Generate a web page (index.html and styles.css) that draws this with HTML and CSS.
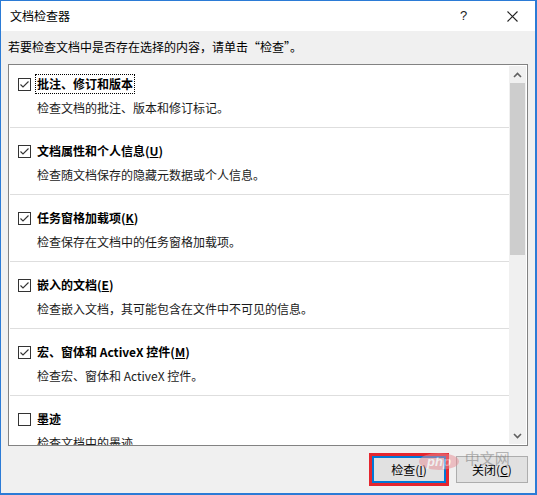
FILE: index.html
```html
<!DOCTYPE html>
<html lang="zh-CN">
<head>
<meta charset="utf-8">
<title>文档检查器</title>
<link rel="stylesheet" href="styles.css">
</head>
<body>
<div class="window">
  <div class="titlebar">
    <span class="title">文档检查器</span>
    <span class="help">?</span>
    <span class="close">
      <svg width="11" height="11" viewBox="0 0 11 11"><path d="M0.5 0.5L10.5 10.5M10.5 0.5L0.5 10.5" stroke="#222" stroke-width="1.1" fill="none"/></svg>
    </span>
  </div>
  <div class="body">
    <div class="intro">若要检查文档中是否存在选择的内容，请单击“检查”。</div>
    <div class="list">
      <div class="items">
        <div class="item">
          <div class="row">
            <span class="cb checked"><svg width="11" height="11" viewBox="0 0 11 11"><path d="M1.5 5.5L4 8L9.5 2.5" stroke="#333" stroke-width="1.1" fill="none"/></svg></span>
            <span class="name focus">批注、修订和版本</span>
          </div>
          <div class="desc">检查文档的批注、版本和修订标记。</div>
        </div>
        <div class="item">
          <div class="row">
            <span class="cb checked"><svg width="11" height="11" viewBox="0 0 11 11"><path d="M1.5 5.5L4 8L9.5 2.5" stroke="#333" stroke-width="1.1" fill="none"/></svg></span>
            <span class="name">文档属性和个人信息(<u>U</u>)</span>
          </div>
          <div class="desc">检查随文档保存的隐藏元数据或个人信息。</div>
        </div>
        <div class="item">
          <div class="row">
            <span class="cb checked"><svg width="11" height="11" viewBox="0 0 11 11"><path d="M1.5 5.5L4 8L9.5 2.5" stroke="#333" stroke-width="1.1" fill="none"/></svg></span>
            <span class="name">任务窗格加载项(<u>K</u>)</span>
          </div>
          <div class="desc">检查保存在文档中的任务窗格加载项。</div>
        </div>
        <div class="item">
          <div class="row">
            <span class="cb checked"><svg width="11" height="11" viewBox="0 0 11 11"><path d="M1.5 5.5L4 8L9.5 2.5" stroke="#333" stroke-width="1.1" fill="none"/></svg></span>
            <span class="name">嵌入的文档(<u>E</u>)</span>
          </div>
          <div class="desc">检查嵌入文档，其可能包含在文件中不可见的信息。</div>
        </div>
        <div class="item">
          <div class="row">
            <span class="cb checked"><svg width="11" height="11" viewBox="0 0 11 11"><path d="M1.5 5.5L4 8L9.5 2.5" stroke="#333" stroke-width="1.1" fill="none"/></svg></span>
            <span class="name">宏、窗体和 ActiveX 控件(<u>M</u>)</span>
          </div>
          <div class="desc">检查宏、窗体和 ActiveX 控件。</div>
        </div>
        <div class="item">
          <div class="row">
            <span class="cb"></span>
            <span class="name">墨迹</span>
          </div>
          <div class="desc">检查文档中的墨迹。</div>
        </div>
      </div>
      <div class="scrollbar">
        <div class="arrow up"><svg width="9" height="6" viewBox="0 0 9 6"><path d="M1 5L4.5 1.5L8 5" stroke="#606060" stroke-width="1.6" fill="none"/></svg></div>
        <div class="track">
          <div class="thumb"></div>
        </div>
        <div class="arrow down"><svg width="9" height="6" viewBox="0 0 9 6"><path d="M1 1L4.5 4.5L8 1" stroke="#606060" stroke-width="1.6" fill="none"/></svg></div>
      </div>
    </div>
    <div class="buttons">
      <span class="highlight"><button class="btn primary">检查(<u>I</u>)</button></span>
      <button class="btn">关闭(<u>C</u>)</button>
    </div>
  </div>
  <div class="watermark"><span class="wm-php">php</span><span class="wm-cn">中文网</span></div>
</div>
</body>
</html>
```

FILE: styles.css
```css
html, body {
  margin: 0;
  padding: 0;
  background: #ffffff;
}
body {
  font-family: "Noto Sans CJK SC", "Noto Sans", "DejaVu Sans", sans-serif;
  font-size: 12px;
  color: #000;
}
.window {
  position: relative;
  box-sizing: border-box;
  width: 537px;
  height: 495px;
  border: 1px solid #2b7bd6;
  border-width: 1px 2px 2px 1px;
  display: flex;
  flex-direction: column;
  overflow: hidden;
}
.titlebar {
  height: 30px;
  flex: none;
  background: #ffffff;
  display: flex;
  align-items: center;
  padding-left: 9px;
}
.title {
  font-size: 12px;
  line-height: 16px;
  flex: 1;
  margin-top: -1px;
}
.help {
  width: 12px;
  font-size: 13px;
  line-height: 16px;
  color: #222;
  margin-right: 35px;
  font-family: "Liberation Sans", sans-serif;
}
.close {
  width: 11px;
  height: 11px;
  margin-right: 17px;
  display: flex;
}
.body {
  flex: 1;
  background: #f0f0f0;
  padding: 0 7px 0 7px;
  display: flex;
  flex-direction: column;
}
.intro {
  height: 33px;
  line-height: 16px;
  padding-top: 8px;
  box-sizing: border-box;
}
.list {
  height: 382px;
  box-sizing: border-box;
  border: 1px solid #828282;
  background: #ffffff;
  display: flex;
  overflow: hidden;
}
.items {
  flex: 1;
  overflow: hidden;
  margin-top: -4px;
  padding-left: 1px;
}
.item {
  height: 67px;
  box-sizing: border-box;
  border-bottom: 1px solid #dedede;
  padding-top: 16px;
}
.row {
  display: flex;
  align-items: center;
  height: 14px;
  padding-left: 8px;
}
.cb {
  width: 13px;
  height: 13px;
  box-sizing: border-box;
  border: 1px solid #333333;
  background: #fff;
  display: flex;
  align-items: center;
  justify-content: center;
  flex: none;
}
.name {
  margin-left: 6px;
  font-weight: bold;
  line-height: 16px;
  white-space: nowrap;
}
.name.focus {
  outline: 1px dotted #000;
  outline-offset: 1px;
}
.desc {
  margin-top: 9px;
  padding-left: 27px;
  line-height: 16px;
  color: #1a1a1a;
  white-space: nowrap;
}
.scrollbar {
  width: 17px;
  flex: none;
  background: #f0f0f0;
  display: flex;
  flex-direction: column;
  margin: 1px 1px 1px 0;
}
.arrow {
  height: 17px;
  flex: none;
  display: flex;
  align-items: center;
  justify-content: center;
}
.track {
  flex: 1;
  display: flex;
  flex-direction: column;
}
.thumb {
  height: 172px;
  background: #cdcdcd;
  margin: 0 1px;
}
.buttons {
  display: flex;
  justify-content: flex-end;
  align-items: center;
  padding-top: 7px;
  gap: 7px;
  padding-right: 0;
}
.highlight {
  display: flex;
  border: 3px solid #e5262f;
  padding: 0;
}
.btn {
  width: 72px;
  height: 27px;
  box-sizing: border-box;
  border: 1px solid #adadad;
  background: #e1e1e1;
  font-family: "Noto Sans CJK SC", "Noto Sans", sans-serif;
  font-size: 12px;
  line-height: 16px;
  color: #000;
  padding: 0;
  margin: 0;
}
.btn.primary {
  border: 2px solid #0078d7;
  width: 74px;
  height: 27px;
}
.watermark {
  position: absolute;
  left: 418px;
  top: 452px;
  display: flex;
  align-items: center;
  gap: 6px;
  opacity: 0.5;
  pointer-events: none;
}
.wm-php {
  font-family: "Liberation Sans", sans-serif;
  font-style: italic;
  font-weight: bold;
  font-size: 13px;
  color: #ffffff;
  background: #e88c94;
  border-radius: 50%;
  padding: 1px 8px;
}
.wm-cn {
  font-size: 15px;
  color: #777;
  margin-top: -8px;
}
```
